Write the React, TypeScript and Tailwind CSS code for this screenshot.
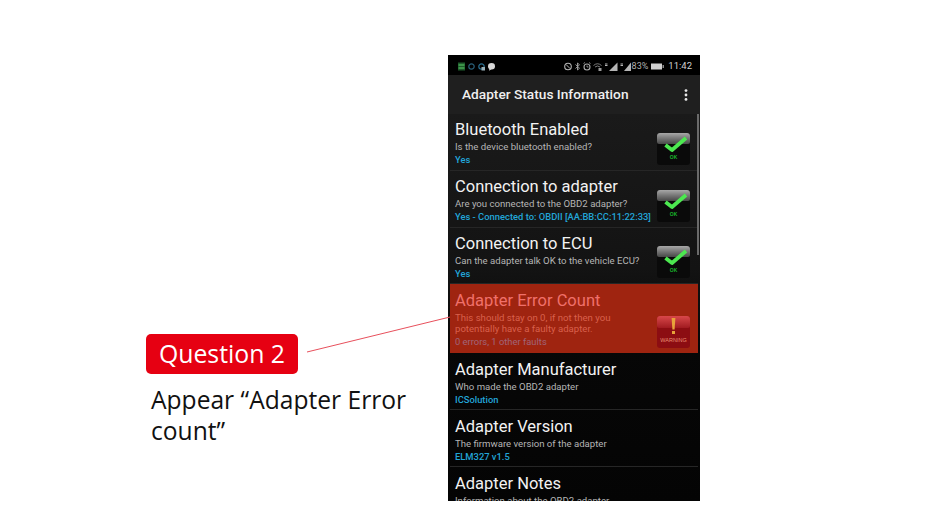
const sans = "font-['Roboto',sans-serif]";

type RowProps = {
  title: string;
  sub: string;
  value?: string;
  icon?: boolean;
  h?: string;
  pt?: string;
};

function OkBadge() {
  return (
    <div className="relative w-[33px] h-[32px] rounded-[3px] bg-[#0a0a0a] overflow-hidden shrink-0">
      <div className="h-[11px] bg-gradient-to-b from-[#a8a8a8] to-[#484848] rounded-b-[2px]" />
      <svg viewBox="0 0 33 32" className="absolute inset-0 w-[33px] h-[32px]">
        <path d="M8.5 12 L15 17 L29 5" fill="none" stroke="#4ce850" strokeWidth="3.8" strokeLinejoin="round" />
      </svg>
      <div className="absolute bottom-[5px] inset-x-0 text-center text-[5px] leading-[6px] font-bold text-[#19b52a] font-['Liberation_Sans',sans-serif]">
        OK
      </div>
    </div>
  );
}

function WarnBadge() {
  return (
    <div className="relative w-[33px] h-[32px] rounded-[3px] bg-[#8c0d12] overflow-hidden shrink-0">
      <div className="h-[12px] bg-gradient-to-b from-[#d8474a] to-[#a11a20] rounded-b-[2px]" />
      <svg viewBox="0 0 33 32" className="absolute inset-0 w-[33px] h-[32px]">
        <path d="M14.6 2 H18.4 L17.6 13.5 H15.4 Z" fill="#e8a23a" />
        <rect x="15" y="15" width="3" height="3" fill="#e8a23a" />
      </svg>
      <div className="absolute bottom-[5px] inset-x-0 text-center text-[5.5px] leading-[6px] text-[#e88a70] font-['Liberation_Sans',sans-serif]">
        WARNING
      </div>
    </div>
  );
}

function Row({ title, sub, value, icon, h = "h-[57px]", pt = "pt-[6px]" }: RowProps) {
  return (
    <div className={`${h} mx-[2px] pl-[5px] pr-[8px] flex justify-between border-b border-[#262626]`}>
      <div className={`${pt} min-w-0 whitespace-nowrap`}>
        <div className="text-[16.5px] leading-[20px] text-[#f2f2f2]">{title}</div>
        <div className="text-[9.6px] leading-[14px] text-[#b5b5b5]">{sub}</div>
        {value && <div className="text-[9.4px] leading-[13px] -mt-[1px] text-[#22a5d8] font-medium">{value}</div>}
      </div>
      {icon && (
        <div className="self-end mb-[5px]">
          <OkBadge />
        </div>
      )}
    </div>
  );
}

function StatusBar() {
  return (
    <div className="h-[20px] pt-[2px] bg-black flex items-center justify-between pl-[10px] pr-[8px]">
      <div className="flex items-center gap-[3px]">
        <svg width="7" height="9" viewBox="0 0 7 9">
          <rect x="0" y="0.5" width="7" height="8" fill="#1d5a2a" />
          <path d="M0.5 3H6.5M0.5 6H6.5" stroke="#5ecb6a" strokeWidth="1" />
        </svg>
        <svg width="7" height="9" viewBox="0 0 7 9">
          <circle cx="3.5" cy="4.5" r="2.7" fill="none" stroke="#2a5f78" strokeWidth="1.2" />
        </svg>
        <svg width="7" height="9" viewBox="0 0 7 9">
          <circle cx="3.5" cy="4.5" r="2.7" fill="none" stroke="#2a6f90" strokeWidth="1.2" />
          <rect x="3.5" y="5" width="3.5" height="3.5" fill="#9ab0b8" />
        </svg>
        <svg width="7" height="9" viewBox="0 0 7 9">
          <ellipse cx="3.5" cy="4.2" rx="3.5" ry="3.2" fill="#d8d8d8" />
          <path d="M1.5 6.5 L1 8.8 L3.5 7.2Z" fill="#d8d8d8" />
        </svg>
      </div>
      <div className="flex items-center gap-[2px]">
        <svg width="8" height="9" viewBox="0 0 8 9">
          <circle cx="4" cy="4.5" r="3.3" fill="none" stroke="#b5b5b5" strokeWidth="1.1" />
          <path d="M2 2.5 L6 6.5" stroke="#b5b5b5" strokeWidth="1" />
        </svg>
        <svg width="7" height="9" viewBox="0 0 7 9">
          <path d="M1.5 2.5 L5.5 6.2 L3.5 8 V1 L5.5 2.8 L1.5 6.5" fill="none" stroke="#a8a8a8" strokeWidth="0.9" />
        </svg>
        <svg width="8" height="9" viewBox="0 0 8 9">
          <circle cx="4" cy="5" r="3" fill="none" stroke="#a8a8a8" strokeWidth="1.1" />
          <path d="M0.5 1.5 L2 0.5 M7.5 1.5 L6 0.5 M4 3.5 V5 H5.5" stroke="#a8a8a8" strokeWidth="0.8" fill="none" />
        </svg>
        <svg width="9" height="9" viewBox="0 0 9 9">
          <path d="M0.5 3.5 Q4.5 0 8.5 3.5 M2 5 Q4.5 3 7 5" fill="none" stroke="#8a8a8a" strokeWidth="0.9" />
          <rect x="5.5" y="6" width="3" height="3" fill="#9a9a9a" />
        </svg>
        <svg width="14" height="9" viewBox="0 0 14 9">
          <path d="M13.5 0.5 V9 H5 Z" fill="#b5b5b5" />
          <path d="M1 2 H3.5 M1 3.5 H3.5" stroke="#b5b5b5" strokeWidth="1" />
        </svg>
        <svg width="11" height="9" viewBox="0 0 11 9">
          <path d="M11 0.5 V9 H4 Z" fill="#b5b5b5" />
          <path d="M0.5 2 H3 M0.5 3.5 H3" stroke="#b5b5b5" strokeWidth="1" />
        </svg>
        <span className="text-[9px] leading-[10px] text-[#b0b0b0] -ml-[1px]">83%</span>
        <svg width="13" height="7" viewBox="0 0 13 7" className="ml-[1px]">
          <rect x="0" y="0.5" width="11" height="6" fill="#d0d0d0" />
          <rect x="11.5" y="2" width="1.5" height="3" fill="#888" />
        </svg>
        <span className="text-[9.5px] leading-[10px] text-[#d0d0d0] ml-[2px]">11:42</span>
      </div>
    </div>
  );
}

function Phone() {
  return (
    <div className={`relative w-[252px] h-[446px] bg-black overflow-hidden ${sans}`}>
      <StatusBar />
      <div className="h-[39px] bg-[#1f1f1f] flex items-center justify-between pl-[14px] pr-[12px]">
        <span className="text-[13.7px] font-medium text-[#efefef]">Adapter Status Information</span>
        <svg width="4" height="12" viewBox="0 0 4 12">
          <circle cx="2" cy="1.6" r="1.4" fill="#e8e8e8" />
          <circle cx="2" cy="6" r="1.4" fill="#e8e8e8" />
          <circle cx="2" cy="10.4" r="1.4" fill="#e8e8e8" />
        </svg>
      </div>
      <div className="h-[387px] bg-[linear-gradient(to_bottom,#1a1a1a_0%,#131313_40%,#070707_60%,#040404_100%)]">
        <Row title="Bluetooth Enabled" sub="Is the device bluetooth enabled?" value="Yes" icon />
        <Row title="Connection to adapter" sub="Are you connected to the OBD2 adapter?" value="Yes - Connected to: OBDII [AA:BB:CC:11:22:33]" icon />
        <Row title="Connection to ECU" sub="Can the adapter talk OK to the vehicle ECU?" value="Yes" icon h="h-[56px]" />
        <div className="h-[69px] mx-[2px] pl-[5px] pr-[8px] bg-[#9f2410] flex justify-between">
          <div className="pt-[7px] whitespace-nowrap">
            <div className="text-[16.5px] leading-[20px] text-[#f0706a]">Adapter Error Count</div>
            <div className="text-[9.6px] leading-[11px] mt-[1px] w-[170px] whitespace-normal text-[#d9604c]">
              This should stay on 0, if not then you potentially have a faulty adapter.
            </div>
            <div className="text-[9.4px] leading-[13px] mt-[1px] text-[#a0657a]">0 errors, 1 other faults</div>
          </div>
          <div className="self-end mb-[5px]">
            <WarnBadge />
          </div>
        </div>
        <Row title="Adapter Manufacturer" sub="Who made the OBD2 adapter" value="ICSolution" pt="pt-[7px]" />
        <Row title="Adapter Version" sub="The firmware version of the adapter" value="ELM327 v1.5" pt="pt-[7px]" />
        <Row title="Adapter Notes" sub="Information about the OBD2 adapter" pt="pt-[7px]" />
      </div>
      {/* scrollbar */}
      <div className="absolute right-[1px] top-[59px] w-[2px] h-[141px] bg-[#6a6a6a]" />
    </div>
  );
}

export default function App() {
  return (
    <div className="relative w-[950px] h-[514px] bg-white overflow-hidden flex">
      <div className="w-[302px] ml-[146px] pt-[334px] font-['Open_Sans',sans-serif]">
        <div className="w-[152px] h-[40px] rounded-[5px] bg-[#e60012] flex items-center justify-center text-[24.8px] text-white">
          Question 2
        </div>
        <div className="ml-[5px] mt-[10px] w-[270px] text-[24.6px] leading-[31px] text-[#111111]">
          Appear “Adapter Error count”
        </div>
      </div>
      <div className="pt-[55px]">
        <Phone />
      </div>
      <svg className="absolute inset-0 pointer-events-none" width="950" height="514">
        <line x1="307" y1="352" x2="450" y2="317" stroke="#e8505c" strokeWidth="1" />
      </svg>
    </div>
  );
}
